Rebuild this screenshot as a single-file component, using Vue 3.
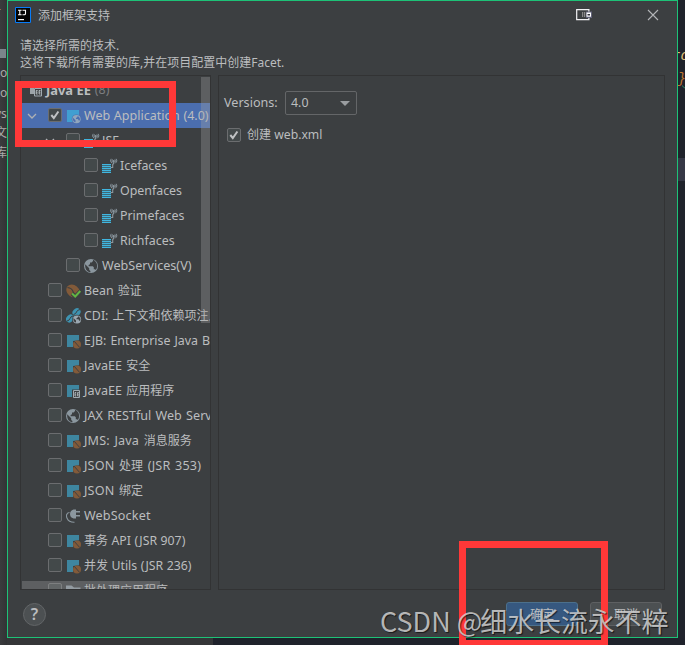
<script setup>
const rows = [
  { d: 2, icon: 'jsf', t: 'JSF', open: true },
  { d: 3, icon: 'jsf', t: 'Icefaces' },
  { d: 3, icon: 'jsf', t: 'Openfaces' },
  { d: 3, icon: 'jsf', t: 'Primefaces' },
  { d: 3, icon: 'jsf', t: 'Richfaces' },
  { d: 2, icon: 'globe', t: 'WebServices(V)', fit: 'wider' },
  { d: 1, icon: 'bean', t: 'Bean 验证' },
  { d: 1, icon: 'cdi', t: 'CDI: 上下文和依赖项注入' },
  { d: 1, icon: 'sq', t: 'EJB: Enterprise Java Beans' },
  { d: 1, icon: 'sq', t: 'JavaEE 安全', fit: 'wider' },
  { d: 1, icon: 'earapp', t: 'JavaEE 应用程序', fit: 'wider' },
  { d: 1, icon: 'globe', t: 'JAX RESTful Web Services', fit: 'wider' },
  { d: 1, icon: 'sq', t: 'JMS: Java 消息服务', fit: 'loose' },
  { d: 1, icon: 'sq', t: 'JSON 处理 (JSR 353)', fit: 'loose' },
  { d: 1, icon: 'sq', t: 'JSON 绑定', fit: 'loose' },
  { d: 1, icon: 'plug', t: 'WebSocket', fit: 'loose' },
  { d: 1, icon: 'sq', t: '事务 API (JSR 907)', fit: 'tight' },
  { d: 1, icon: 'sq', t: '并发 Utils (JSR 236)', fit: 'tight' },
  { d: 1, icon: 'folder', t: '批处理应用程序' },
]
// Han and Latin runs are set at slightly different sizes
const runs = (t) => t.split(/([\u4e00-\u9fff]+)/).filter(Boolean).map((s) => ({ s, han: s > '\u4e00' }))
</script>

<template>
  <div class="screen">
    <svg class="defs" width="0" height="0">
      <symbol id="globe" viewBox="0 0 16 16">
        <circle cx="7" cy="8" r="7" fill="#8b979f" />
        <path d="M1.200 6.200 5.200 10.300V12l1.200 1v1.200C3 13.800.8 11 1.200 6.200ZM9 1.800v1.300L7.600 4.400H6v1.800L4.600 7.100v1.200h4.200l1 1v2h1.200l.8.800C14.300 9 13.500 3.500 9 1.800Z" fill="#3c3f41" />
      </symbol>
      <symbol id="jsf" viewBox="0 0 16 16">
        <path d="M0 6h9v1H0zM0 8h9v1H0zM0 10h9v1H0zM0 12h9v1H0zM0 14h9v1H0z" fill="#40b6e0" />
        <path d="M0 7h9v1H0zM0 9h9v1H0zM0 11h9v1H0zM0 13h9v1H0z" fill="#40b6e0" opacity=".35" />
        <path d="M8.500 9.500h2.200V6.500l1-1V3" fill="none" stroke="#8b979f" stroke-width="1.100" />
        <circle cx="11.700" cy="3" r="1" fill="#8b979f" />
        <path d="M9.900 5.200Q7.400 3 9.200.8M13.500 5.200Q16 3 14.200.8M10.600 4.400Q9.400 3 10.500 1.400M12.800 4.400Q14 3 12.900 1.400" fill="none" stroke="#8b979f" stroke-width=".9" />
      </symbol>
      <symbol id="sq" viewBox="0 0 16 16">
        <path d="M1 2h12v5.300L7 8v6H1z" fill="#3e86a0" />
        <circle cx="11" cy="11.500" r="4" fill="#825a39" />
        <path d="m8.200 8.200 2.600 3 2.900 3.300" fill="none" stroke="#3c3f41" stroke-width="1" />
      </symbol>
      <symbol id="web" viewBox="0 0 16 16">
        <path d="M1 2h12v12H1z" fill="#419fd1" />
        <circle cx="10.500" cy="11.200" r="4.800" fill="#4b6eaf" />
        <circle cx="10.500" cy="11.200" r="4.100" fill="#91a6bd" />
        <path d="m7 9.800 2.500 2.500v2C7.500 14 6.500 12 7 9.800ZM11.500 8v1l-1.500 1v1h2l.7 1.500h1C14.600 11 13.500 8.500 11.500 8Z" fill="#4b6eaf" />
      </symbol>
      <symbol id="earapp" viewBox="0 0 16 16">
        <path d="M1 2h12v4.500H6V14H1z" fill="#3e86a0" />
        <path d="M7.500 7.500h6v7h-6z" fill="none" stroke="#a1aab0" />
        <path d="M10.200 9.500H9V13h1.200M9 11.200h1.200M12.800 9.500h-1.200V13h1.200M11.600 11.200h1.200" fill="none" stroke="#c0c7cb" stroke-width=".8" />
      </symbol>
      <symbol id="bean" viewBox="0 0 16 16">
        <ellipse cx="7" cy="8" rx="7.200" ry="5.900" transform="rotate(40 7 8)" fill="#825a39" />
        <path d="M1.500 4.500Q6 5 7 8.500T12 13" fill="none" stroke="#3c3f41" stroke-width="1.200" />
        <path d="m6 10.500 3.200 3.200L14.500 8" fill="none" stroke="#3c3f41" stroke-width="4" />
        <path d="m6 10.500 3.200 3L14.300 8" fill="none" stroke="#62b543" stroke-width="2" />
      </symbol>
      <symbol id="cdi" viewBox="0 0 16 16">
        <ellipse cx="10.500" cy="4.300" rx="4.300" ry="3.700" transform="rotate(-45 10.500 4.300)" fill="#3e93b1" />
        <ellipse cx="4" cy="10.500" rx="4.300" ry="3.500" transform="rotate(-45 4 10.500)" fill="#3e93b1" />
        <path d="M7.500 6.500Q10 6 10.500 4T14 1.500M1 13Q3.500 12.500 4 10.500T7 8" fill="none" stroke="#3c3f41" />
        <circle cx="11" cy="11.500" r="4.800" fill="#3c3f41" />
        <circle cx="11" cy="11.500" r="4.100" fill="#9aa7b0" />
        <path d="m7.500 10.100 2.500 2.500v2C8 14.300 7 12.300 7.500 10.100ZM12 8.300v1l-1.500 1v1h2l.7 1.500h1C15.100 11.300 14 8.800 12 8.300Z" fill="#3c3f41" />
      </symbol>
      <symbol id="plug" viewBox="0 0 16 16">
        <path d="M10 1.500v9H7.500Q4 9.500 4 6T7.500 1.500ZM10 3h4v1.600h-4zM10 7h4v1.600h-4z" fill="#8b979f" />
        <path d="M3.500 4.500C.2 5-.1 8 1.200 10.500 2.500 13.800 5 14.300 8.500 14.200" fill="none" stroke="#8b979f" stroke-width="1.100" />
      </symbol>
      <symbol id="folder" viewBox="0 0 16 16">
        <path d="M0 2.500h5.500l2.500 2h6.500V14H0z" fill="#8b979f" />
      </symbol>
      <symbol id="tick" viewBox="0 0 14 14">
        <path d="m3.300 7 2.500 3 4.600-6.500" fill="none" stroke="#c0c2c4" stroke-width="2" />
      </symbol>
      <symbol id="chev" viewBox="0 0 10 10">
        <path d="m1 3 4 4 4-4" fill="none" stroke="#afb1b3" stroke-width="1.300" />
      </symbol>
    </svg>

    <div class="backdrop-left">
      <span class="frag f0">-</span>
      <i class="block"></i>
      <span class="frag f1">o</span>
      <span class="frag f2">o</span>
      <span class="frag f3">ys</span>
      <span class="frag f4">文</span>
      <span class="frag f5">库</span>
    </div>
    <div class="backdrop-right">
      <span class="code c1">ro</span>
      <span class="code c2">;}</span>
      <i class="band"></i>
    </div>
    <div class="backdrop-bottom"></div>

    <section class="dialog">
      <header class="title">
        <svg class="logo" viewBox="0 0 16 16">
          <path d="M.5.500h15v15H.5z" fill="#050505" stroke="#087cfa" />
          <path d="M3 3.300h3.600M4.800 3.300v4.400M3 7.700h3.600M7.500 3.300h3v3.200q0 1.300-1.300 1.300H7.500" fill="none" stroke="#fff" stroke-width="1.100" />
          <path d="M3 12h6v1.200H3z" fill="#fff" />
        </svg>
        <span>添加框架支持</span>
        <svg class="dock" viewBox="0 0 16 12">
          <path d="M.7.700h12.200v10H.7z" fill="#3c3f41" stroke="#f2f2f5" stroke-width="1.200" />
          <path d="M6 3h1.200v5H6zM8 3h1.200v5H8z" fill="#888" />
          <path d="M10 2.500h6v6.500h-6z" fill="#62637a" />
          <path d="M10.500 3.500h4.500v4.200h-4.500z" fill="#fff" />
          <path d="M11.500 5h2.500v1.500h-2.500z" fill="#33343f" />
        </svg>
        <svg class="close" viewBox="0 0 12 12"><path d="m1 1 10 10M11 1 1 11" stroke="#b4b6b8" stroke-width="1.100" /></svg>
      </header>
      <div class="intro">
        <p>请选择所需的技术.</p>
        <p>这将下载所有需要的库,并在项目配置中创建Facet.</p>
      </div>
      <main class="body">
        <div class="tree">
          <div class="row group">
            <svg class="icon" viewBox="0 0 16 16">
              <path d="M1 3h4l1.500 1.500H13V6H5v6H1z" fill="#9da4a8" />
              <path d="M5.500 6.500h7v7.500h-7z" fill="none" stroke="#a1aab0" />
              <path d="M8.600 8.500H7.200V12h1.400M7.200 10.200h1.400M11.500 8.500h-1.400V12h1.400M10.100 10.200h1.400" fill="none" stroke="#c0c7cb" stroke-width=".9" />
            </svg>
            <b>Java EE</b><span class="count">(8)</span>
          </div>
          <div class="row d1 selected">
            <svg class="chev"><use href="#chev" /></svg>
            <span class="check"><svg><use href="#tick" /></svg></span>
            <svg class="icon"><use href="#web" /></svg>
            <span class="label">Web Application (4.0)</span>
          </div>
          <div v-for="r in rows" :key="r.t" class="row" :class="['d' + r.d, r.fit]">
            <svg class="chev"><use v-if="r.open" href="#chev" /></svg>
            <span class="check"></span>
            <svg class="icon"><use :href="'#' + r.icon" /></svg>
            <span class="label"><span v-for="(p, i) in runs(r.t)" :key="i" :class="{ han: p.han }">{{ p.s }}</span></span>
          </div>
          <i class="vbar"></i>
          <i class="hbar"></i>
        </div>
        <div class="panel">
          <div class="field">
            <span class="lbl">Versions:</span>
            <span class="select">4.0<i></i></span>
          </div>
          <div class="field second">
            <span class="check"><svg><use href="#tick" /></svg></span>
            <span class="create"><span class="han">创建</span> web.xml</span>
          </div>
        </div>
      </main>
      <footer class="foot">
        <span class="help">?</span>
        <span class="btn primary">确定</span>
        <span class="btn">取消</span>
      </footer>
    </section>

    <div class="mark m1"></div>
    <div class="mark m2"></div>
    <div class="watermark"><span>CSDN @</span><span class="name">细水长流永不粹</span></div>
  </div>
</template>

<style>
body { margin: 0; overflow: hidden; }
</style>
<style scoped>
* { box-sizing: border-box; }
.screen { position: relative; width: 685px; height: 645px; overflow: hidden; background: #353638; padding-left: 7px; font: 13px/18px "Noto Sans", "Noto Sans CJK SC", sans-serif; color: #bbbdbf; }
.defs { position: absolute; }
.backdrop-left { position: absolute; left: 0; top: 0; width: 7px; height: 645px; overflow: hidden; background: linear-gradient(90deg, #3a3b3d, #323335); }
.frag { position: absolute; left: 0; font-size: 12px; color: #aaa; }
.f0 { top: 0; left: -3px; }
.f1 { top: 64px; }
.f2 { top: 84px; }
.f3 { top: 105px; left: -5px; }
.f4 { top: 124px; left: -5px; }
.f5 { top: 144px; left: -5px; }
.block { position: absolute; left: 0; top: 49px; width: 6px; height: 9px; background: #7b858b; }
.backdrop-right { position: absolute; right: 0; top: 0; width: 7px; height: 645px; overflow: hidden; background: #20232c; }
.code { position: absolute; font: italic 14px/18px "Liberation Mono", monospace; }
.c1 { top: 47px; left: -6px; color: #e0c27a; }
.c2 { top: 70px; left: -9px; color: #c07832; text-decoration: underline wavy #2c8a68 1px; }
.band { position: absolute; left: 0; top: 158px; width: 7px; height: 23px; background: #363846; }
.backdrop-bottom { position: absolute; left: 213px; right: 0; top: 638px; height: 7px; background: #1f222b; }
.dialog { position: relative; display: flex; flex-direction: column; width: 671px; height: 638px; border: 1px solid #1dc277; background: #3c3f41; }
.title { display: flex; align-items: center; height: 29px; padding: 0 18px 0 7px; }
.title > span { margin-left: 7px; padding-top: 2px; font-size: 12px; }
.logo { width: 16px; height: 16px; }
.dock { width: 16px; height: 12px; margin-left: auto; }
.close { width: 12px; height: 12px; margin-left: 55px; }
.intro { padding: 7px 12px 0; height: 46px; font-size: 12px; line-height: 17px; }
.intro p { margin: 0; }
.body { display: flex; gap: 7px; height: 515px; padding-left: 12px; }
.tree { position: relative; width: 191px; height: 515px; overflow: hidden; border: 1px solid #323334; padding-top: 1px; }
.row { display: flex; align-items: center; height: 25px; white-space: nowrap; }
.label { font-size: 12.4px; word-spacing: .8px; white-space: pre; }
.loose .label { font-size: 12.6px; letter-spacing: .15px; word-spacing: 1.3px; }
.wider .label { font-size: 12.6px; word-spacing: 1px; }
.tight .label { font-size: 12.3px; word-spacing: .3px; }
.label .han, .loose .label .han, .han { font-size: 12px; letter-spacing: 0; }
.group { padding-left: 8px; height: 26px; }
.group b { margin-left: -1px; font-size: 12.9px; }
.count { margin-left: 4px; font-size: 12.4px; color: #7c7e80; }
.d1 { padding-left: 6px; }
.d2 { padding-left: 24px; }
.d3 { padding-left: 42px; }
.selected { background: #4b6eaf; }
.selected .label { font-size: 12.5px; word-spacing: .5px; }
.chev { width: 10px; height: 10px; margin-right: 11px; flex: none; }
.check { width: 14px; height: 14px; flex: none; border: 1px solid #6b6d6f; border-radius: 2px; background: #43494a; }
.row .check { margin-right: 4px; position: relative; top: -1px; }
.check svg { display: block; width: 14px; height: 14px; margin: -1px; }
.icon { width: 16px; height: 16px; flex: none; margin-right: 2px; }
.vbar { position: absolute; right: 0; top: 1px; width: 9px; height: 246px; background: rgba(166, 166, 166, .32); }
.hbar { position: absolute; left: 1px; bottom: 0; width: 138px; height: 8px; background: rgba(166, 166, 166, .32); }
.panel { width: 447px; height: 515px; border: 1px solid #323334; padding: 14px 5px; }
.field { display: flex; align-items: center; height: 25px; }
.lbl { width: 54px; font-size: 12.6px; }
.select { display: flex; align-items: center; justify-content: space-between; width: 72px; height: 24px; margin-left: 7px; padding: 1px 6px 0 5px; border: 1px solid #646668; border-radius: 2px; font-size: 12.4px; }
.select i { border: 5px solid transparent; border-top: 5px solid #9a9da0; border-bottom: 0; }
.second { margin-top: 7px; padding-left: 3px; gap: 6px; }
.create { padding-top: 1px; font-size: 12.2px; }
.foot { display: flex; align-items: center; padding: 1px 15px 0; height: 47px; }
.help { width: 23px; height: 23px; border: 1px solid #626567; border-radius: 50%; background: #4c5052; text-align: center; font-size: 16px; line-height: 21px; font-weight: 600; }
.btn { width: 72px; height: 24px; margin-left: 12px; border: 1px solid #5e6062; border-radius: 3px; background: #4c5052; text-align: center; font-size: 12px; line-height: 23px; }
.primary { margin-left: auto; background: #365880; border-color: #4c708c; }
.mark { position: absolute; border: 7px solid #ff3838; }
.m1 { left: 15px; top: 81px; width: 161px; height: 66px; }
.m2 { left: 459px; top: 541px; width: 149px; height: 106px; }
.watermark { position: absolute; left: 380px; top: 603px; white-space: nowrap; font: 27px/36px "Noto Sans CJK SC", sans-serif; color: rgba(215, 215, 215, .82); text-shadow: 1px 1px 1px rgba(0, 0, 0, .6); }
.name { margin-left: -2px; font-size: 26.900px; }
</style>
